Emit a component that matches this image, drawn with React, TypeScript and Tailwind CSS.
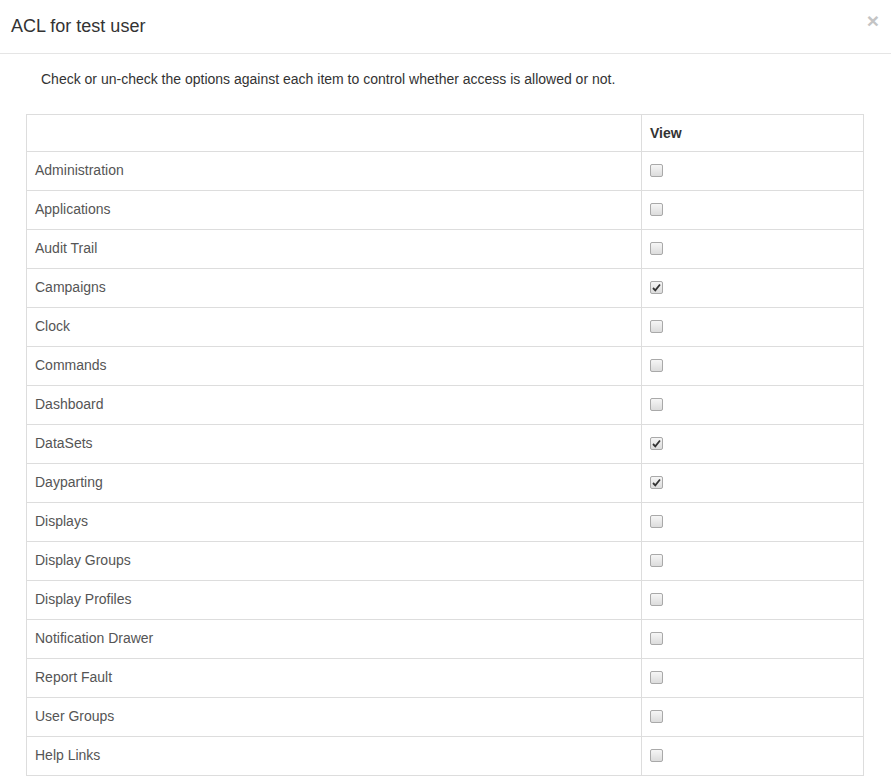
import React from "react";

const items = [
  { name: "Administration", view: false },
  { name: "Applications", view: false },
  { name: "Audit Trail", view: false },
  { name: "Campaigns", view: true },
  { name: "Clock", view: false },
  { name: "Commands", view: false },
  { name: "Dashboard", view: false },
  { name: "DataSets", view: true },
  { name: "Dayparting", view: true },
  { name: "Displays", view: false },
  { name: "Display Groups", view: false },
  { name: "Display Profiles", view: false },
  { name: "Notification Drawer", view: false },
  { name: "Report Fault", view: false },
  { name: "User Groups", view: false },
  { name: "Help Links", view: false },
];

function Box({ checked }: { checked: boolean }) {
  return (
    <div className="w-[13px] h-[13px] rounded-[2px] border border-[#a9a9a9] bg-gradient-to-b from-[#f6f6f6] to-[#dcdcdc] flex items-center justify-center">
      {checked && (
        <svg width="9" height="9" viewBox="0 0 9 9">
          <path d="M1 5 L3.3 7.3 L8 1.5" fill="none" stroke="#333" strokeWidth="1.8" />
        </svg>
      )}
    </div>
  );
}

export default function App() {
  return (
    <div className="w-[891px] h-[776px] bg-white overflow-hidden font-['Liberation_Sans',Arial,sans-serif] text-[#333]">
      <div className="h-[54px] border-b border-[#e5e5e5] flex items-center justify-between pl-[11px] pr-[12px]">
        <h4 className="text-[18px] text-[#333]">ACL for test user</h4>
        <span className="text-[21px] font-bold text-[#c4c4c4] leading-none -mt-[12px]">×</span>
      </div>
      <div className="px-[26px]">
        <p className="text-[14px] text-[#333] pl-[15px] pt-[15px] h-[60px]">
          Check or un-check the options against each item to control whether access is allowed or not.
        </p>
        <table className="w-[838px] border-collapse text-[14px]">
          <thead>
            <tr className="h-[37px]">
              <th className="border border-[#ddd] text-left px-[8px] w-[615px]"></th>
              <th className="border border-[#ddd] text-left px-[8px] font-bold text-[#333] text-[14px]">View</th>
            </tr>
          </thead>
          <tbody>
            {items.map((it) => (
              <tr key={it.name} className="h-[39px]">
                <td className="border border-[#ddd] px-[8px] pb-[2px] text-[#555]">{it.name}</td>
                <td className="border border-[#ddd] px-[8px] pb-[2px]">
                  <Box checked={it.view} />
                </td>
              </tr>
            ))}
          </tbody>
        </table>
      </div>
    </div>
  );
}
